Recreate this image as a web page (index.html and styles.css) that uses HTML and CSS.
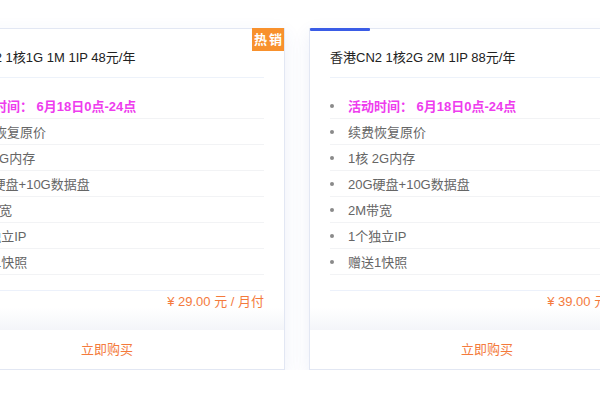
FILE: index.html
```html
<!DOCTYPE html>
<html lang="zh-CN">
<head>
<meta charset="utf-8">
<title>套餐</title>
<link rel="stylesheet" href="styles.css">
</head>
<body>
<div class="row">
  <div class="card">
    <span class="badge">热销</span>
    <div class="body">
      <div class="title">香港CN2 1核1G 1M 1IP 48元/年</div>
      <ul class="list">
        <li class="hot">活动时间： 6月18日0点-24点</li>
        <li>续费恢复原价</li>
        <li>1核 1G内存</li>
        <li>20G硬盘+10G数据盘</li>
        <li>1M带宽</li>
        <li>1个独立IP</li>
        <li>赠送1快照</li>
      </ul>
      <div class="price">¥ 29.00 元 / 月付</div>
    </div>
    <div class="buy">立即购买</div>
  </div>
  <div class="card">
    <span class="bar"></span>
    <div class="body">
      <div class="title">香港CN2 1核2G 2M 1IP 88元/年</div>
      <ul class="list">
        <li class="hot">活动时间： 6月18日0点-24点</li>
        <li>续费恢复原价</li>
        <li>1核 2G内存</li>
        <li>20G硬盘+10G数据盘</li>
        <li>2M带宽</li>
        <li>1个独立IP</li>
        <li>赠送1快照</li>
      </ul>
      <div class="price">¥ 39.00 元 / 月付</div>
    </div>
    <div class="buy">立即购买</div>
  </div>
</div>
</body>
</html>
```
FILE: styles.css
```css
html, body {
  margin: 0;
  padding: 0;
  background: #fff;
  overflow: hidden;
}
body {
  font-family: "Liberation Sans", "Noto Sans CJK SC", sans-serif;
  font-size: 13px;
}
.row {
  display: flex;
  gap: 24px;
  margin-left: -71px;
  padding-top: 28px;
}
.card {
  position: relative;
  flex: none;
  width: 356px;
  box-sizing: border-box;
  border: 1px solid #e2e7f3;
  background: #fff;
  box-shadow: 0 6px 18px rgba(60, 90, 190, 0.09);
}
.badge {
  position: absolute;
  top: -1px;
  right: 0;
  width: 32px;
  height: 23px;
  line-height: 23px;
  text-align: center;
  background: #f8912d;
  color: #fff;
  font-weight: bold;
  font-size: 13px;
  letter-spacing: 2px;
  text-indent: 2px;
}
.bar {
  position: absolute;
  top: -1px;
  left: 0;
  width: 60px;
  height: 3px;
  background: #3a5ce6;
  border-radius: 1px;
}
.body {
  padding: 0 20px 19px;
  background: linear-gradient(to bottom, #fff calc(100% - 22px), #f4f5f9 100%);
}
.title {
  padding: 20px 0 10px;
  line-height: 18px;
  color: #222;
  border-bottom: 1px solid #edf2fa;
}
.list {
  list-style: none;
  margin: 15px 0 0;
  padding: 0;
}
.list li {
  display: flex;
  align-items: center;
  height: 25px;
  border-bottom: 1px solid #f2f3f5;
  color: #666;
}
.list li::before {
  content: "";
  flex: none;
  width: 4px;
  height: 4px;
  border-radius: 50%;
  background: #8a8a8a;
  margin-right: 14px;
}
.list li.hot {
  color: #ee3cee;
  font-weight: bold;
}
.price {
  margin-top: 15px;
  border-top: 1px solid #ecf1fb;
  padding-top: 2px;
  line-height: 18px;
  text-align: right;
  color: #f47a3c;
}
.buy {
  height: 39px;
  line-height: 39px;
  text-align: center;
  color: #f47a3c;
}
```
